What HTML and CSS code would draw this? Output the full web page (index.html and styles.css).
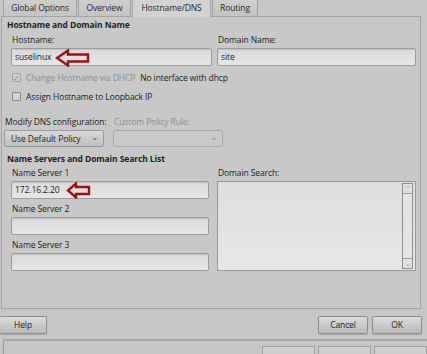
FILE: index.html
```html
<!DOCTYPE html>
<html lang="en">

<head>
    <meta charset="UTF-8">
    <title>Hostname/DNS</title>
    <link rel="stylesheet" href="styles.css">
</head>

<body>
    <div class="tabs">
        <div class="tab tab-global">Global Options</div>
        <div class="tab tab-overview">Overview</div>
        <div class="tab tab-active">Hostname/DNS</div>
        <div class="tab tab-routing">Routing</div>
    </div>

    <div class="panel">
        <div class="section">Hostname and Domain Name</div>
        <div class="two-col">
            <div class="field">
                <div class="label">Hostname:</div>
                <div class="entry">suselinux
                    <svg class="arrow arrow-host" width="36" height="18" viewBox="0 0 36 18">
                        <polygon points="2,9 13,1.5 13,5.5 33,5.5 33,12.5 13,12.5 13,16.5" fill="none" stroke="#9b1212" stroke-width="2.4"/>
                    </svg>
                </div>
            </div>
            <div class="field">
                <div class="label">Domain Name:</div>
                <div class="entry">site</div>
            </div>
        </div>

        <div class="check-row disabled">
            <span class="check checked">&#10003;</span>
            <span class="check-label">Change Hostname via DHCP</span>
            <span class="note">No interface with dhcp</span>
        </div>
        <div class="check-row">
            <span class="check"></span>
            <span class="check-label">Assign Hostname to Loopback IP</span>
        </div>

        <div class="dns-config">
            <div class="combo-field combo-field-first">
                <div class="label">Modify DNS configuration:</div>
                <div class="combo">Use Default Policy <span class="chev">&#8964;</span></div>
            </div>
            <div class="combo-field">
                <div class="label grey">Custom Policy Rule:</div>
                <div class="combo combo-empty"><span class="chev">&#8964;</span></div>
            </div>
        </div>

        <div class="section section-ns">Name Servers and Domain Search List</div>
        <div class="two-col">
            <div class="servers">
                <div class="label">Name Server 1</div>
                <div class="entry">172.16.2.20
                    <svg class="arrow arrow-ns" width="26" height="17" viewBox="0 0 26 17">
                        <polygon points="2,8.5 10,1.5 10,5 23,5 23,12 10,12 10,15.5" fill="none" stroke="#9b1212" stroke-width="2.4"/>
                    </svg>
                </div>
                <div class="label">Name Server 2</div>
                <div class="entry"></div>
                <div class="label">Name Server 3</div>
                <div class="entry"></div>
            </div>
            <div class="search">
                <div class="label">Domain Search:</div>
                <div class="textarea">
                    <div class="scrollbar">
                        <span class="step">&#8963;</span>
                        <span class="trough"></span>
                        <span class="step">&#8964;</span>
                    </div>
                </div>
            </div>
        </div>
    </div>

    <div class="buttons">
        <div class="button btn-help">Help</div>
        <div class="spacer"></div>
        <div class="button">Cancel</div>
        <div class="button">OK</div>
    </div>

    <div class="under">
        <div class="under-btn"></div>
        <div class="under-btn"></div>
        <div class="under-btn"></div>
    </div>
</body>

</html>
```

FILE: styles.css
```css
body {
    margin: 0;
    width: 427px;
    height: 354px;
    overflow: hidden;
    background-color: #c6c6c6;
    font-family: "Open Sans", "Liberation Sans", sans-serif;
    font-size: 8.5px;
    letter-spacing: -0.1px;
    color: #1e1e1e;
}

.tabs {
    display: flex;
    height: 16px;
    padding-left: 3px;
    align-items: flex-end;
}

.tab {
    height: 18px;
    line-height: 18px;
    border: 1px solid #a2a2a2;
    border-bottom: none;
    border-radius: 3px 3px 0 0;
    background: linear-gradient(#cfcfcf, #c3c3c3);
    text-align: center;
    box-sizing: border-box;
    margin-right: 1px;
    color: #2a2a2a;
    font-size: 8.5px;
}

.tab-global { width: 74px; }
.tab-overview { width: 53px; }
.tab-routing { width: 46px; }

.tab-active {
    width: 79px;
    height: 19px;
    margin-bottom: -1px;
    background: #d2d2d2;
    position: relative;
    z-index: 1;
    border-color: #a8a8a8;
}

.panel {
    margin-left: 1px;
    width: 420px;
    height: 293px;
    box-sizing: border-box;
    border: 1px solid #a4a4a4;
    background-color: #c8c8c8;
    padding: 1px 5px 0 4px;
}

.section {
    font-weight: bold;
    font-size: 8.5px;
    height: 14px;
    line-height: 14px;
    padding-left: 1px;
}

.two-col {
    display: grid;
    grid-template-columns: 201px 199px;
    column-gap: 5px;
    padding-left: 5px;
}

.label {
    height: 13px;
    line-height: 13px;
    padding-left: 1px;
    margin-top: 1px;
    white-space: nowrap;
}

.grey {
    color: #8e8e8e;
}

.entry {
    position: relative;
    height: 18px;
    line-height: 16px;
    box-sizing: border-box;
    border: 1px solid #9c9c9c;
    border-radius: 2px;
    background: linear-gradient(#dadada, #e6e6e6);
    padding-left: 3px;
    margin-top: 2px;
    box-shadow: inset 0 1px 1px rgba(0, 0, 0, 0.12);
}

.arrow {
    position: absolute;
}

.arrow-host {
    left: 43px;
    top: 0;
}

.arrow-ns {
    left: 54px;
    top: 0;
}

.check-row {
    display: flex;
    align-items: center;
    height: 19px;
    padding-left: 6px;
}

.disabled {
    margin-top: 2px;
}

.disabled .check-label {
    color: #8f8f8f;
}

.check {
    width: 7px;
    height: 7px;
    border: 1px solid #8a8a8a;
    border-radius: 1px;
    background: #d4d4d4;
    margin-right: 5px;
    font-size: 8px;
    line-height: 7px;
    text-align: center;
    color: #8a8a8a;
}

.checked {
    border-color: #a6a6a6;
    background: #cdcdcd;
}

.note {
    margin-left: 5px;
    color: #1e1e1e;
}

.dns-config {
    display: flex;
    gap: 9px;
    margin-top: 8px;
    margin-left: -2px;
}

.combo-field-first {
    width: 100px;
}

.combo {
    height: 17px;
    box-sizing: border-box;
    margin-top: 2px;
    border: 1px solid #9a9a9a;
    border-radius: 2px;
    background: linear-gradient(#d8d8d8, #bfbfbf);
    line-height: 15px;
    padding-left: 6px;
    width: 100px;
    display: flex;
    justify-content: space-between;
    padding-right: 4px;
}

.combo-empty {
    width: 110px;
    background: #c9c9c9;
    border-color: #a9a9a9;
    justify-content: flex-end;
}

.chev {
    font-size: 9px;
    line-height: 11px;
    color: #555;
}

.combo-empty .chev {
    color: #8e8e8e;
}

.section-ns {
    margin-top: 5px;
}

.servers .label {
    margin-top: 0;
}

.servers .entry {
    width: 198px;
    margin-bottom: 3px;
}

.search .label {
    margin-top: 0;
}

.textarea {
    height: 90px;
    margin-top: 2px;
    box-sizing: border-box;
    border: 1px solid #999;
    background: linear-gradient(#dedede, #e6e6e6);
    display: flex;
    justify-content: flex-end;
    padding: 1px 2px 1px 0;
}

.scrollbar {
    width: 9px;
    border: 1px solid #8d8d8d;
    background: #d8d8d8;
    display: flex;
    flex-direction: column;
}

.step {
    height: 9px;
    font-size: 7px;
    line-height: 9px;
    text-align: center;
    color: #999;
    background: #e0e0e0;
}

.trough {
    flex: 1;
    border-top: 1px solid #9a9a9a;
    border-bottom: 1px solid #9a9a9a;
    background: #e4e4e4;
}

.buttons {
    display: flex;
    gap: 4px;
    margin-top: 7px;
    padding-right: 5px;
}

.button {
    width: 50px;
    height: 18px;
    box-sizing: border-box;
    border: 1px solid #8e8e8e;
    border-radius: 2px;
    background: linear-gradient(#dcdcdc, #b9b9b9);
    text-align: center;
    line-height: 16px;
    font-size: 8.5px;
    box-shadow: 0 1px 1px rgba(0, 0, 0, 0.15);
}

.btn-help {
    width: 47px;
    border-left: none;
}

.spacer {
    flex: 1;
}

.under {
    margin: 5px 0 0 3px;
    height: 20px;
    border-top: 2px solid #a9a9a9;
    border-left: 1px solid #999;
    display: flex;
    justify-content: flex-end;
    gap: 3px;
    padding-top: 5px;
}

.under-btn {
    width: 51px;
    height: 10px;
    border: 1px solid #a0a0a0;
    background: #cfcfcf;
}
```
